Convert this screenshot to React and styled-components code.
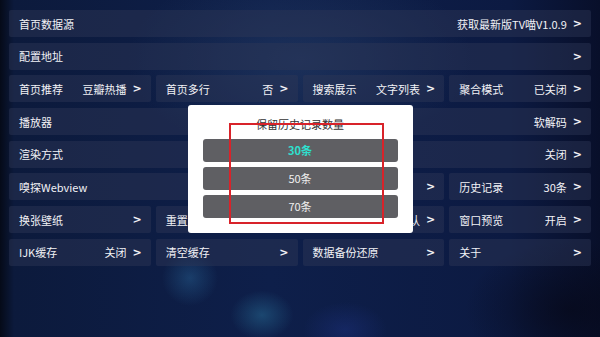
import React from "react";
import styled, { createGlobalStyle } from "styled-components";

const Global = createGlobalStyle`
  html, body { margin: 0; padding: 0; width: 100%; height: 100%; }
  body {
    font-family: "Noto Sans CJK SC", "Noto Sans", sans-serif;
    overflow: hidden;
  }
  #root { width: 600px; height: 337px; }
`;

const Screen = styled.div`
  position: relative;
  width: 600px;
  height: 337px;
  box-sizing: border-box;
  padding: 10px 9px 0 9px;
  background:
    radial-gradient(ellipse 40px 40px at 190px 278px, rgba(40, 100, 150, 0.45), transparent 70%),
    radial-gradient(ellipse 45px 35px at 262px 315px, rgba(40, 110, 150, 0.5), transparent 70%),
    radial-gradient(ellipse 60px 40px at 345px 330px, rgba(30, 50, 130, 0.45), transparent 70%),
    radial-gradient(ellipse 230px 130px at 300px 60px, rgba(45, 70, 110, 0.45), transparent 75%),
    radial-gradient(ellipse 150px 100px at 570px 310px, rgba(6, 8, 24, 0.7), transparent 70%),
    linear-gradient(90deg, #050a18 0px, #0c1a3c 14px, #0e1f4a 45%, #0c1a42 85%, #080f2a 100%);
`;

const Grid = styled.div`
  display: grid;
  grid-template-columns: repeat(4, 1fr);
  grid-auto-rows: 27px;
  row-gap: 5.7px;
  column-gap: 5px;
`;

const Item = styled.div`
  grid-column: span ${(p) => p.$span || 1};
  display: flex;
  align-items: center;
  justify-content: space-between;
  padding: 0 9px 0 10px;
  border-radius: 2px;
  background: rgba(46, 56, 86, 0.45);
  color: #f2f2f6;
  font-size: 11px;
  white-space: nowrap;
`;

const Label = styled.span``;

const Value = styled.span`
  display: flex;
  align-items: center;
  gap: 6px;
`;

const Arrow = styled.span`
  font-family: "DejaVu Sans", sans-serif;
  font-weight: bold;
  font-size: 11px;
`;

const Overlay = styled.div`
  position: absolute;
  inset: 0;
  display: flex;
  align-items: center;
  justify-content: center;
`;

const Dialog = styled.div`
  position: relative;
  width: 225px;
  box-sizing: border-box;
  padding: 11px 15px 15px;
  background: #ffffff;
  border-radius: 3px;
  display: flex;
  flex-direction: column;
`;

const Title = styled.div`
  text-align: center;
  font-size: 11px;
  line-height: 16px;
  color: #333333;
  margin-bottom: 7px;
`;

const Options = styled.div`
  display: flex;
  flex-direction: column;
  gap: 5px;
`;

const Option = styled.div`
  height: 23px;
  border-radius: 3px;
  background: #5f5f63;
  display: flex;
  align-items: center;
  justify-content: center;
  font-size: 11px;
  color: ${(p) => (p.$active ? "#2ee0cf" : "#f0f0f0")};
  font-weight: ${(p) => (p.$active ? 700 : 400)};
`;

const Highlight = styled.div`
  position: absolute;
  left: 41px;
  top: 18px;
  width: 155px;
  height: 101px;
  box-sizing: border-box;
  border: 2px solid #d8232a;
  pointer-events: none;
`;

const rows = [
  { label: "首页数据源", value: "获取最新版TV喵V1.0.9", span: 4 },
  { label: "配置地址", value: "", span: 4 },
  { label: "首页推荐", value: "豆瓣热播" },
  { label: "首页多行", value: "否" },
  { label: "搜索展示", value: "文字列表" },
  { label: "聚合模式", value: "已关闭" },
  { label: "播放器", value: "软解码", span: 4 },
  { label: "渲染方式", value: "关闭", span: 4 },
  { label: "嗅探Webview", value: "", span: 3 },
  { label: "历史记录", value: "30条" },
  { label: "换张壁纸", value: "" },
  { label: "重置配置", value: "" },
  { label: "画面比例", value: "默认" },
  { label: "窗口预览", value: "开启" },
  { label: "IJK缓存", value: "关闭" },
  { label: "清空缓存", value: "" },
  { label: "数据备份还原", value: "" },
  { label: "关于", value: "" },
];

export default function App() {
  return (
    <>
      <Global />
      <Screen>
        <Grid>
          {rows.map((r, i) => (
            <Item key={i} $span={r.span}>
              <Label>{r.label}</Label>
              <Value>
                {r.value && <span>{r.value}</span>}
                <Arrow>&gt;</Arrow>
              </Value>
            </Item>
          ))}
        </Grid>
        <Overlay>
          <Dialog>
            <Title>保留历史记录数量</Title>
            <Options>
              <Option $active>30条</Option>
              <Option>50条</Option>
              <Option>70条</Option>
            </Options>
            <Highlight />
          </Dialog>
        </Overlay>
      </Screen>
    </>
  );
}
